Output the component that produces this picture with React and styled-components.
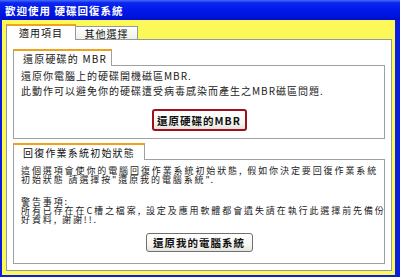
import styled, { createGlobalStyle } from "styled-components";

const GlobalStyle = createGlobalStyle`
  html, body {
    margin: 0;
    padding: 0;
    overflow: hidden;
    background: #0a1ee0;
  }
  body {
    font-family: "Noto Sans CJK TC", "Noto Sans CJK SC", sans-serif;
  }
`;

const Window = styled.div`
  width: 400px;
  height: 277px;
  display: flex;
  flex-direction: column;
  background: #0a1ee0;
  box-sizing: border-box;
`;

const TitleBar = styled.div`
  height: 20px;
  flex: none;
  display: flex;
  align-items: center;
  padding-left: 5px;
  background: linear-gradient(180deg, #4a6cf8 0%, #0a26f0 14%, #0016e8 60%, #0010cc 100%);
  color: #fff;
  font-size: 10.5px;
  font-weight: 700;
  letter-spacing: 1px;
  white-space: nowrap;
`;

const Body = styled.div`
  flex: 1;
  margin: 0 5px 2px 2px;
  background: #fdf85a;
  padding: 4px 3px 4px 4px;
  display: flex;
  flex-direction: column;
`;

const TabRow = styled.div`
  display: flex;
  align-items: flex-end;
  height: 16px;
  flex: none;
`;

const Tab = styled.div`
  box-sizing: border-box;
  display: flex;
  align-items: center;
  justify-content: center;
  font-size: 10px;
  letter-spacing: 1px;
  color: #111;
  white-space: nowrap;
  border: 1px solid #919b9c;
  ${(p) =>
    p.$active
      ? `
    width: 70px;
    height: 16px;
    background: #fff;
    border-top: 2px solid #f2a21a;
    border-bottom: none;
    padding-bottom: 2px;
  `
      : `
    width: 62px;
    height: 14px;
    background: linear-gradient(180deg, #ffffff 0%, #f0efe9 100%);
    border-left: none;
  `}
`;

const TabFiller = styled.div`
  flex: 1;
  height: 1px;
  background: #919b9c;
`;

const Panel = styled.div`
  flex: 1;
  background: #fff;
  border: 1px solid #919b9c;
  border-top: none;
  padding: 9px 6px 6px 6px;
  display: flex;
  flex-direction: column;
  gap: 4px;
`;

const Group = styled.div`
  display: flex;
  flex-direction: column;
  flex: ${(p) => (p.$grow ? 1 : "none")};
`;

const GroupHead = styled.div`
  display: flex;
  align-items: flex-end;
  height: 17px;
`;

const GroupLabel = styled.div`
  box-sizing: border-box;
  height: 17px;
  width: ${(p) => p.$w}px;
  padding-left: 9px;
  display: flex;
  align-items: center;
  border-top: 2px solid #f2a21a;
  border-left: 1px solid #a0a0a0;
  border-right: 1px solid #a0a0a0;
  font-size: 10px;
  letter-spacing: 1.2px;
  color: #111;
  white-space: nowrap;
`;

const GroupFiller = styled.div`
  flex: 1;
  height: 1px;
  background: #a0a0a0;
`;

const GroupBox = styled.div`
  flex: 1;
  border: 1px solid #a0a0a0;
  border-top: none;
  padding: ${(p) => p.$pad};
  display: flex;
  flex-direction: column;
`;

const Text = styled.p`
  margin: ${(p) => p.$m || 0};
  font-size: 10px;
  letter-spacing: 1px;
  line-height: 10px;
  color: #222;
  white-space: nowrap;
`;

const DenseText = styled(Text)`
  font-size: 9px;
  letter-spacing: 1.9px;
  line-height: 9px;
`;

const Button = styled.button`
  align-self: center;
  box-sizing: border-box;
  width: ${(p) => p.$w}px;
  height: ${(p) => p.$h}px;
  margin-top: ${(p) => p.$mt}px;
  padding: 0;
  font-family: inherit;
  font-size: 10.5px;
  font-weight: 700;
  letter-spacing: 1px;
  color: #111;
  background: linear-gradient(180deg, #ffffff 0%, #f4f4f0 70%, #e4e3dc 100%);
  border: ${(p) => (p.$focus ? "2px solid #9c1020" : "1px solid #6f6f6f")};
  border-radius: 3px;
  white-space: nowrap;
`;

export default function App() {
  return (
    <>
      <GlobalStyle />
      <Window>
        <TitleBar>歡迎使用 硬碟回復系統</TitleBar>
        <Body>
          <TabRow>
            <Tab $active>適用項目</Tab>
            <Tab>其他選擇</Tab>
            <TabFiller />
          </TabRow>
          <Panel>
            <Group>
              <GroupHead>
                <GroupLabel $w={99}>還原硬碟的 MBR</GroupLabel>
                <GroupFiller />
              </GroupHead>
              <GroupBox $pad="5px 7px 7px 7px">
                <Text>還原你電腦上的硬碟開機磁區MBR.</Text>
                <Text $m="5px 0 0 0">此動作可以避免你的硬碟遭受病毒感染而產生之MBR磁區問題.</Text>
                <Button $focus $w={95} $h={22} $mt={13}>還原硬碟的MBR</Button>
              </GroupBox>
            </Group>
            <Group $grow>
              <GroupHead>
                <GroupLabel $w={132}>回復作業系統初始狀態</GroupLabel>
                <GroupFiller />
              </GroupHead>
              <GroupBox $pad="6px 7px 8px 7px">
                <DenseText>
                  這個選項會使你的電腦回復作業系統初始狀態, 假如你決定要回復作業系統
                  <br />
                  初始狀態 請選擇按"還原我的電腦系統".
                </DenseText>
                <DenseText $m="13px 0 0 0">
                  警告事項:
                  <br />
                  所有已存在在C槽之檔案, 設定及應用軟體都會遺失請在執行此選擇前先備份
                  <br />
                  好資料, 謝謝!!.
                </DenseText>
                <Button $w={107} $h={19} $mt={9}>還原我的電腦系統</Button>
              </GroupBox>
            </Group>
          </Panel>
        </Body>
      </Window>
    </>
  );
}
